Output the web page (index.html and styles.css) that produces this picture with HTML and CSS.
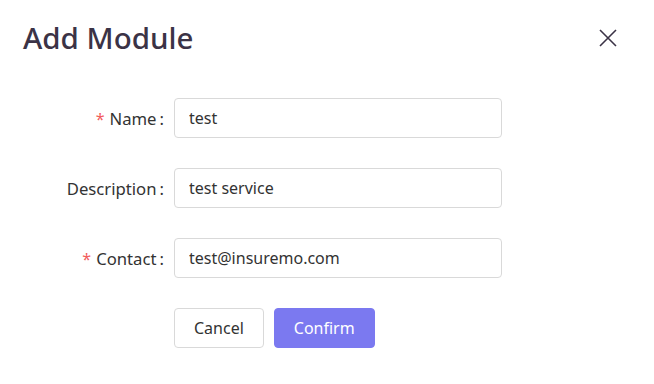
FILE: index.html
```html
<!DOCTYPE html>
<html lang="en">
<head>
  <meta charset="UTF-8">
  <title>Add Module</title>
  <link rel="stylesheet" href="styles.css">
</head>
<body>

  <div class="modal">
    <div class="modal-header">
      <h2 class="modal-title">Add Module</h2>
      <button class="close-button" aria-label="Close">
        <svg width="20" height="20" viewBox="0 0 20 20">
          <path d="M2 2 L18 18 M18 2 L2 18" stroke="#3b3346" stroke-width="1.6" fill="none"/>
        </svg>
      </button>
    </div>

    <form class="module-form">
      <div class="form-row">
        <label class="form-label"><span class="required">*</span>Name<span class="colon">:</span></label>
        <input type="text" class="form-input" value="test">
      </div>
      <div class="form-row">
        <label class="form-label">Description<span class="colon">:</span></label>
        <input type="text" class="form-input" value="test service">
      </div>
      <div class="form-row">
        <label class="form-label"><span class="required">*</span>Contact<span class="colon">:</span></label>
        <input type="text" class="form-input" value="test@insuremo.com">
      </div>
      <div class="form-row">
        <span></span>
        <div class="actions">
          <button type="button" class="btn btn-default">Cancel</button>
          <button type="button" class="btn btn-primary">Confirm</button>
        </div>
      </div>
    </form>
  </div>

</body>
</html>
```

FILE: styles.css
```css
body {
  margin: 0;
  padding: 0;
  background: #fff;
  font-family: "Noto Sans", "Open Sans", sans-serif;
  color: #333;
}
.modal {
  width: 654px;
  height: 384px;
  box-sizing: border-box;
  padding: 16px 36px 0 23px;
}
.modal-header {
  display: flex;
  justify-content: space-between;
  align-items: center;
  height: 44px;
}
.modal-title {
  margin: 0;
  font-size: 29.5px;
  font-weight: 500;
  color: #3b3346;
  line-height: 44px;
}
.close-button {
  background: none;
  border: none;
  padding: 0;
  width: 20px;
  height: 20px;
  cursor: pointer;
  display: flex;
}
.module-form {
  display: flex;
  flex-direction: column;
  gap: 30px;
  margin-top: 38px;
}
.form-row {
  display: grid;
  grid-template-columns: 151px 328px;
  align-items: center;
}
.form-label {
  text-align: right;
  font-size: 16.7px;
  color: #333;
  white-space: nowrap;
}
.required {
  color: #f25c5c;
  margin-right: 5px;
  font-size: 16px;
}
.colon {
  margin: 0 10px 0 3px;
}
.form-input {
  height: 40px;
  box-sizing: border-box;
  border: 1px solid #d9d9d9;
  border-radius: 4px;
  padding: 0 14px;
  font-family: inherit;
  font-size: 16px;
  color: #333;
  outline: none;
}
.actions {
  display: flex;
  gap: 10px;
}
.btn {
  height: 40px;
  box-sizing: border-box;
  border-radius: 4px;
  font-family: inherit;
  font-size: 16px;
  padding: 0 19px;
  cursor: pointer;
}
.btn-default {
  background: #fff;
  border: 1px solid #d9d9d9;
  color: #333;
}
.btn-primary {
  background: #7b79f0;
  border: 1px solid #7b79f0;
  color: #fff;
}
```
